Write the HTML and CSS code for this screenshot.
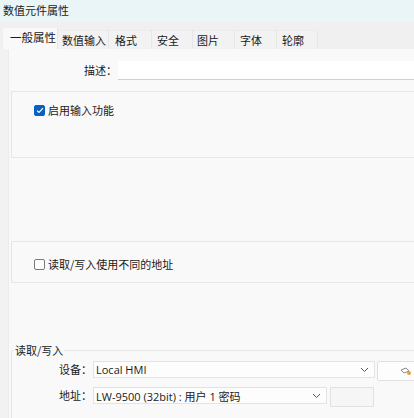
FILE: index.html
```html
<!DOCTYPE html>
<html>
<head>
    <meta name="viewport" content="width=device-width, initial-scale=1.0">
    <link rel="stylesheet" href="styles.css">
</head>
<body>
    <div class="dialog">
        <div class="titlebar">数值元件属性</div>

        <div class="tabs">
            <span class="tab active">一般属性</span>
            <span class="tab">数值输入</span>
            <span class="tab">格式</span>
            <span class="tab">安全</span>
            <span class="tab">图片</span>
            <span class="tab">字体</span>
            <span class="tab">轮廓</span>
        </div>

        <div class="page">
            <div class="sheet">
                <div class="desc-row">
                    <label class="desc-label">描述：</label>
                    <div class="textbox"></div>
                </div>

                <div class="group group-input">
                    <label class="check">
                        <span class="box checked">
                            <svg width="8" height="7" viewBox="0 0 8 7"><path d="M1 3.6 L3 5.4 L7 1.2" fill="none" stroke="#fff" stroke-width="1.2"/></svg>
                        </span>
                        启用输入功能
                    </label>
                </div>

                <div class="group group-addr">
                    <label class="check">
                        <span class="box"></span>
                        读取/写入使用不同的地址
                    </label>
                </div>

                <fieldset class="rw">
                    <legend>读取/写入</legend>
                    <div class="row">
                        <span class="row-label">设备：</span>
                        <div class="combo combo-device">
                            <span>Local HMI</span>
                            <svg width="9" height="6" viewBox="0 0 9 6"><path d="M1 1 L4.5 4.5 L8 1" fill="none" stroke="#555" stroke-width="1"/></svg>
                        </div>
                        <div class="btn">
                            <svg width="12" height="9" viewBox="0 0 12 9"><path d="M1 3 L6 1 L9 4 L4 6 Z" fill="none" stroke="#888" stroke-width="1"/><circle cx="9" cy="6" r="2" fill="#e8a23a"/></svg>
                        </div>
                    </div>
                    <div class="row">
                        <span class="row-label">地址：</span>
                        <div class="combo combo-addr">
                            <span>LW-9500 (32bit) : 用户 1 密码</span>
                            <svg width="9" height="6" viewBox="0 0 9 6"><path d="M1 1 L4.5 4.5 L8 1" fill="none" stroke="#555" stroke-width="1"/></svg>
                        </div>
                        <div class="spare"></div>
                    </div>
                </fieldset>
            </div>
        </div>
    </div>
</body>
</html>
```

FILE: styles.css
```css
* {
    margin: 0;
    padding: 0;
    box-sizing: border-box;
}

html, body {
    width: 414px;
    height: 418px;
    overflow: hidden;
}

body {
    background: #f2f2f2;
    font-family: "Noto Sans CJK SC", sans-serif;
    font-size: 11px;
    color: #1a1a1a;
}

.dialog {
    width: 414px;
    overflow: hidden;
}

.titlebar {
    height: 22px;
    background: #eaf5f8;
    padding: 3px 0 0 3px;
    line-height: 15px;
}

.tabs {
    height: 27px;
    background: #f0f0f0;
    display: flex;
    align-items: flex-end;
    padding-left: 3px;
}

.tab {
    flex-shrink: 0;
    white-space: nowrap;
    height: 19px;
    line-height: 18px;
    background: #f2f2f2;
    border-right: 1px solid #e6e6e6;
    border-top: 1px solid #ececec;
    padding-left: 4px;
}

.tab:nth-child(1) { width: 55px; }
.tab:nth-child(2) { width: 51px; }
.tab:nth-child(3) { width: 43px; padding-left: 6px; }
.tab:nth-child(4) { width: 41px; padding-left: 5px; }
.tab:nth-child(5) { width: 42px; padding-left: 4px; }
.tab:nth-child(6) { width: 42px; padding-left: 5px; }
.tab:nth-child(7) { width: 41px; padding-left: 5px; }

.tab.active {
    height: 21px;
    background: #f9f9f9;
    border-top: none;
    line-height: 19px;
    padding-left: 7px;
    font-size: 11.5px;
}

.page {
    height: 369px;
    background: #f2f2f2;
    padding-left: 8px;
    overflow: hidden;
}

.sheet {
    width: 420px;
    height: 100%;
    background: #f9f9f9;
    border-left: 1px solid #ececec;
    padding: 12px 0 0 2px;
}

.desc-row {
    display: flex;
    height: 19px;
}

.desc-label {
    width: 106px;
    text-align: right;
    line-height: 19px;
}

.textbox {
    margin-left: 1px;
    flex: 1;
    background: #fff;
    border-bottom: 1px solid #cfcfcf;
}

.group {
    border: 1px solid #e6e6e6;
    padding-left: 22px;
}

.group-input {
    margin-top: 11px;
    height: 67px;
    padding-top: 12px;
}

.group-addr {
    margin-top: 83px;
    height: 42px;
    padding-top: 16px;
}

.check {
    display: flex;
    align-items: center;
    gap: 3px;
    height: 13px;
    line-height: 13px;
}

.box {
    width: 11px;
    height: 11px;
    border: 1px solid #7a7a7a;
    border-radius: 2px;
    background: #fdfdfd;
    display: flex;
    align-items: center;
    justify-content: center;
}

.box.checked {
    background: #0a5fc2;
    border-color: #0a5fc2;
}

.rw {
    margin-top: 61px;
    border: none;
    border-top: 1px solid #e6e6e6;
    border-left: 1px solid #e6e6e6;
    padding: 4px 0 0 0;
    height: 76px;
}

.rw legend {
    margin-left: 2px;
    padding: 0 1px;
    line-height: 13px;
}

.row {
    display: flex;
    align-items: flex-start;
    margin-bottom: 6px;
}

.row-label {
    width: 80px;
    text-align: right;
    line-height: 17px;
}

.combo {
    height: 17px;
    margin-left: 1px;
    background: #fdfdfd;
    border: 1px solid #e3e3e3;
    display: flex;
    align-items: center;
    justify-content: space-between;
    padding: 0 5px 0 2px;
    font-family: "Open Sans", "Noto Sans CJK SC", sans-serif;
    font-size: 11px;
}

.combo-device { width: 282px; }
.combo-addr { width: 234px; }

.btn {
    margin-left: 2px;
    width: 60px;
    height: 20px;
    background: #fdfdfd;
    border: 1px solid #e0e0e0;
    border-radius: 2px;
    display: flex;
    align-items: center;
    padding-left: 22px;
}

.spare {
    margin-left: 3px;
    width: 44px;
    height: 20px;
    background: #f6f6f6;
    border: 1px solid #e2e2e2;
}
```
